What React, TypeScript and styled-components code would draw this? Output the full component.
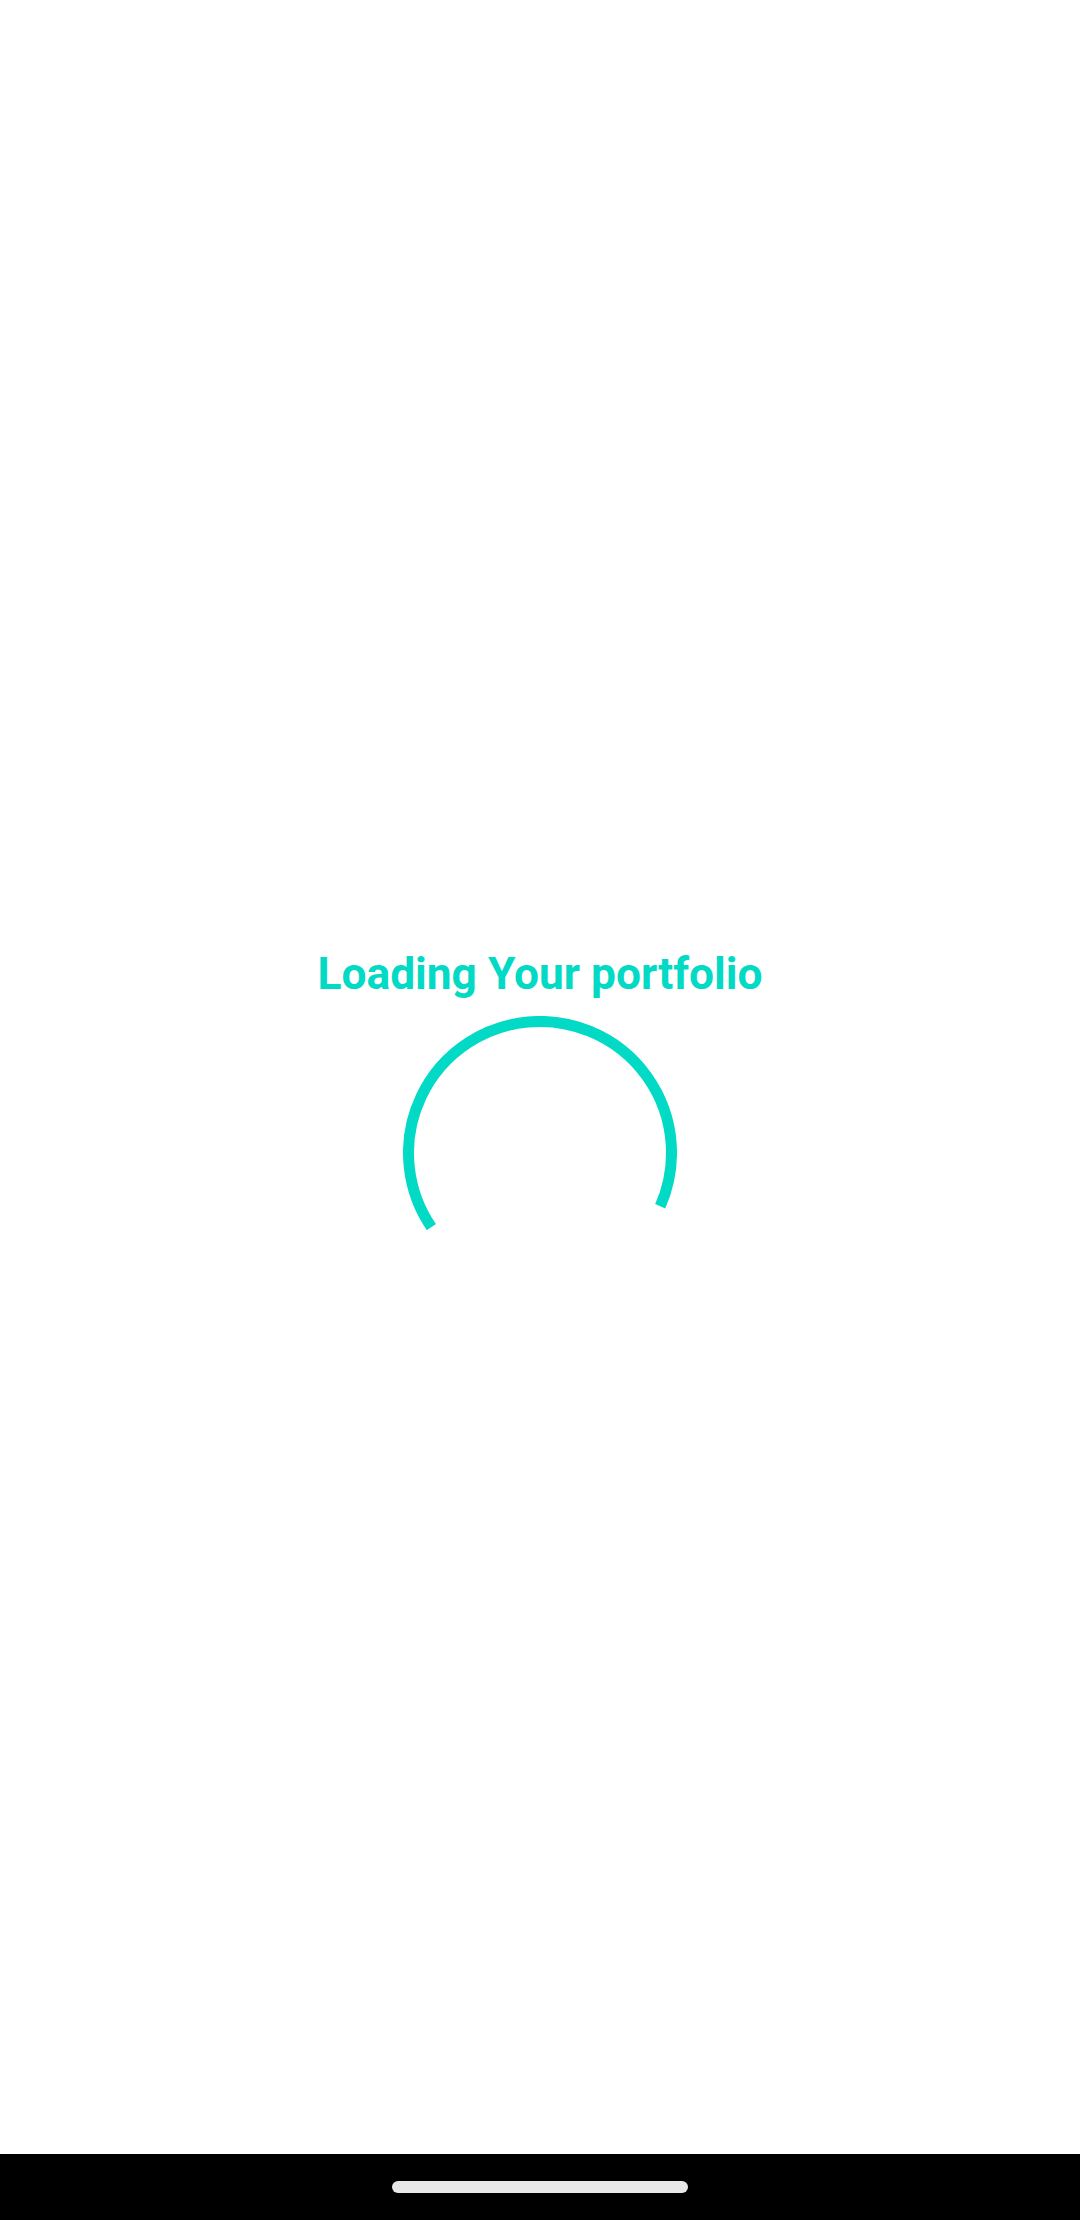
import React from "react";
import styled, { createGlobalStyle } from "styled-components";

const Global = createGlobalStyle`
  html, body { margin: 0; padding: 0; background: #ffffff; }
  #root { height: 2220px; }
`;

const Screen = styled.div`
  width: 1080px;
  height: 2220px;
  display: flex;
  flex-direction: column;
  background: #ffffff;
  font-family: Roboto, "Noto Sans", sans-serif;
`;

const Main = styled.main`
  flex: 1;
  display: flex;
  flex-direction: column;
  align-items: center;
  padding-top: 948px;
  box-sizing: border-box;
`;

const Title = styled.h1`
  margin: 0;
  font-size: 44.3px;
  line-height: 53px;
  font-weight: 700;
  color: #03dac5;
  letter-spacing: 0;
`;

const Spinner = styled.svg`
  margin-top: 15px;
  display: block;
`;

const NavBar = styled.div`
  height: 66px;
  background: #000000;
  display: flex;
  justify-content: center;
  padding-top: 27px;
  box-sizing: border-box;
`;

const Handle = styled.div`
  width: 296px;
  height: 12px;
  border-radius: 6px;
  background: #e8e8e8;
`;

export default function App() {
  return (
    <>
      <Global />
      <Screen>
        <Main>
          <Title>Loading Your portfolio</Title>
          <Spinner width="274" height="274" viewBox="0 0 274 274">
            <path
              d="M 28.4 211.1 A 131.5 131.5 0 1 1 257.2 190.3"
              fill="none"
              stroke="#03dac5"
              strokeWidth="11"
              strokeLinecap="butt"
            />
          </Spinner>
        </Main>
        <NavBar>
          <Handle />
        </NavBar>
      </Screen>
    </>
  );
}
